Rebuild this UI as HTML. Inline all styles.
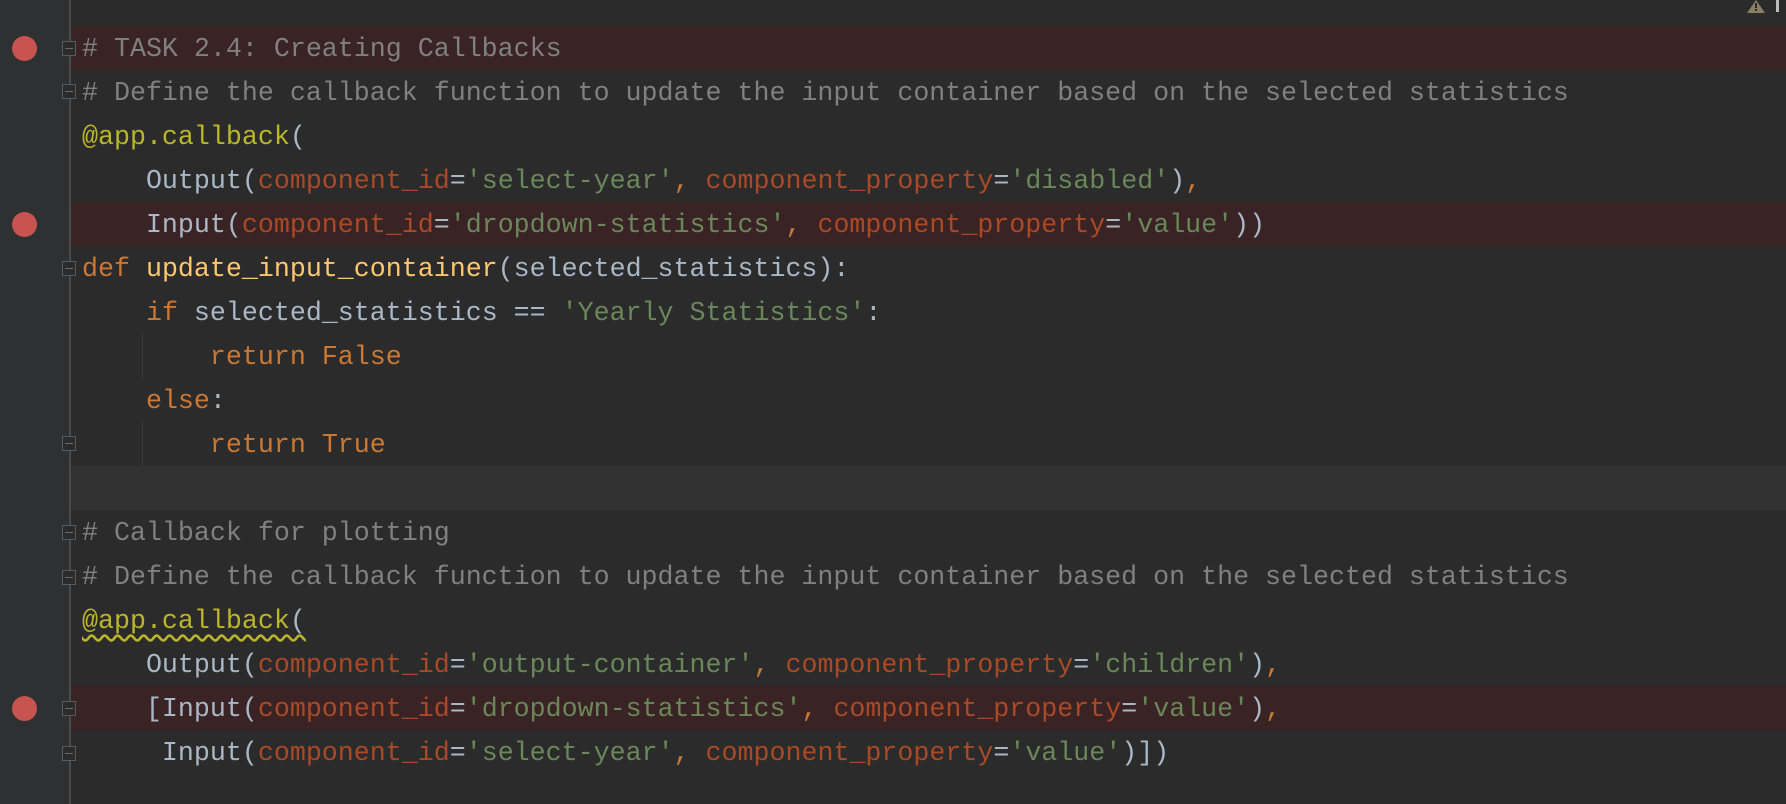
<!DOCTYPE html>
<html><head><style>
body{margin:0;width:1786px;height:804px;background:#2b2b2b;overflow:hidden;position:relative;font-family:"Liberation Mono",monospace;font-size:26.65px}
.g{position:absolute;left:0;top:0;width:69px;height:804px;background:#2f3032}
.gl{position:absolute;left:69px;top:0;width:2px;height:804px;background:#4a4a4a}
.l{position:absolute;left:82px;height:44px;line-height:44px;white-space:pre;color:#a9b7c6;margin-top:2px}
.bp{position:absolute;left:71px;right:0;height:44px;background:#3a2324}
.bd{position:absolute;left:12px;width:25px;height:25px;border-radius:50%;background:#c75450}
.c{color:#808080}.d{color:#bbb529}.k{color:#cc7832}.p{color:#aa4926}.s{color:#6a8759}.f{color:#ffc66d}
.ig{position:absolute;left:142px;width:1px;height:44px;background:#3b3b3b}
.fm{position:absolute;left:62px;width:14px;height:15px;border:1.5px solid #5a5a5a;box-sizing:border-box;background:#2b2b2b}
.fm:after{content:"";position:absolute;left:2px;right:2px;top:5.5px;height:1.5px;background:#6a6a6a}
</style></head><body>
<div class="g"></div>
<div class="bp" style="top:26px"></div>
<div class="bp" style="top:202px"></div>
<div class="bp" style="top:686px"></div>
<div style="position:absolute;left:71px;right:0;top:466px;height:44px;background:#323232"></div>
<div class="gl"></div>
<div class="bd" style="top:36px"></div>
<div class="bd" style="top:212px"></div>
<div class="bd" style="top:696px"></div>
<div class="fm" style="top:41px"></div>
<div class="fm" style="top:84px"></div>
<div class="fm" style="top:261px"></div>
<div class="fm" style="top:436px"></div>
<div class="fm" style="top:525px"></div>
<div class="fm" style="top:570px"></div>
<div class="fm" style="top:701px"></div>
<div class="fm" style="top:746px"></div>
<div class="ig" style="top:334px"></div>
<div class="ig" style="top:422px"></div>
<svg style="position:absolute;left:1746px;top:0" width="20" height="14"><path d="M10 0L19 13H1Z" fill="#8a7e62"/><rect x="9" y="3" width="2" height="5" fill="#2b2b2b"/><rect x="9" y="9" width="2" height="2" fill="#2b2b2b"/></svg>
<div style="position:absolute;left:1776px;top:0;width:3px;height:12px;background:#bbb"></div>
<div class="l c" style="top:26px"># TASK 2.4: Creating Callbacks</div>
<div class="l c" style="top:70px"># Define the callback function to update the input container based on the selected statistics</div>
<div class="l" style="top:114px"><span class="d">@app.callback</span>(</div>
<div class="l" style="top:158px">    Output(<span class="p">component_id</span>=<span class="s">'select-year'</span><span class="k">, </span><span class="p">component_property</span>=<span class="s">'disabled'</span>)<span class="k">,</span></div>
<div class="l" style="top:202px">    Input(<span class="p">component_id</span>=<span class="s">'dropdown-statistics'</span><span class="k">, </span><span class="p">component_property</span>=<span class="s">'value'</span>))</div>
<div class="l" style="top:246px"><span class="k">def </span><span class="f">update_input_container</span>(selected_statistics):</div>
<div class="l" style="top:290px">    <span class="k">if </span>selected_statistics == <span class="s">'Yearly Statistics'</span>:</div>
<div class="l" style="top:334px">        <span class="k">return False</span></div>
<div class="l" style="top:378px">    <span class="k">else</span>:</div>
<div class="l" style="top:422px">        <span class="k">return True</span></div>
<div class="l c" style="top:510px"># Callback for plotting</div>
<div class="l c" style="top:554px"># Define the callback function to update the input container based on the selected statistics</div>
<div class="l" style="top:598px"><span style="text-decoration:underline wavy #bbb529;text-underline-offset:6px"><span class="d">@app.callback</span>(</span></div>
<div class="l" style="top:642px">    Output(<span class="p">component_id</span>=<span class="s">'output-container'</span><span class="k">, </span><span class="p">component_property</span>=<span class="s">'children'</span>)<span class="k">,</span></div>
<div class="l" style="top:686px">    [Input(<span class="p">component_id</span>=<span class="s">'dropdown-statistics'</span><span class="k">, </span><span class="p">component_property</span>=<span class="s">'value'</span>)<span class="k">,</span></div>
<div class="l" style="top:730px">     Input(<span class="p">component_id</span>=<span class="s">'select-year'</span><span class="k">, </span><span class="p">component_property</span>=<span class="s">'value'</span>)])</div>
</body></html>
